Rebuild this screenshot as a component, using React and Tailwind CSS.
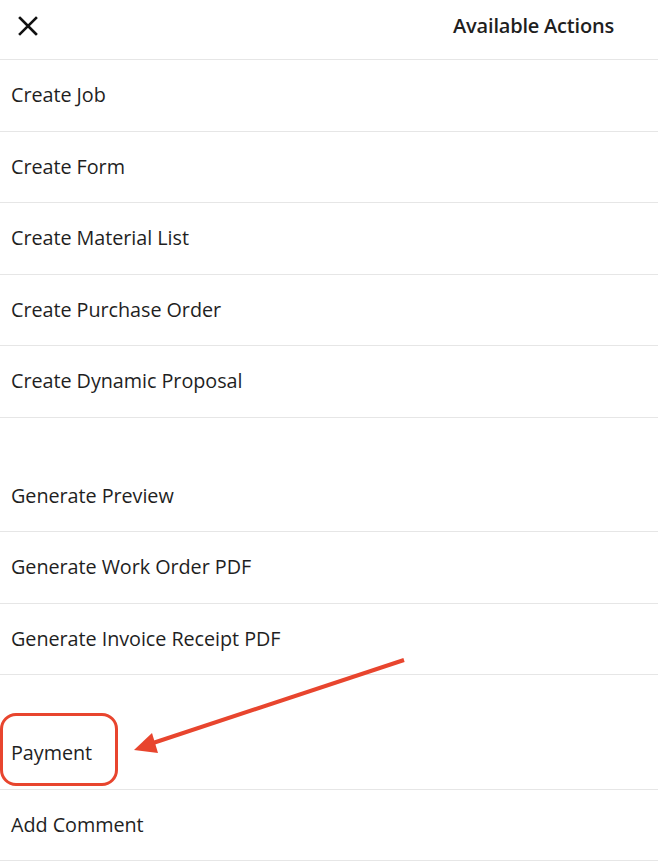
import React from 'react';

const sections = [
  ['Create Job', 'Create Form', 'Create Material List', 'Create Purchase Order', 'Create Dynamic Proposal'],
  ['Generate Preview', 'Generate Work Order PDF', 'Generate Invoice Receipt PDF'],
  ['Payment', 'Add Comment'],
];

const App = () => {
  return (
    <div className="relative w-[658px] h-[864px] bg-white overflow-hidden text-[#1f1f1f]" style={{ fontFamily: '"Open Sans", sans-serif' }}>
      {/* Header */}
      <div className="flex items-center justify-between h-[60px] border-b border-[#e6e6e6] pl-[16px] pr-[44px] pb-[8px]">
        <svg width="24" height="24" viewBox="0 0 24 24" fill="none" stroke="#111" strokeWidth="2.6" strokeLinecap="square">
          <path d="M4 4L20 20M20 4L4 20" />
        </svg>
        <span className="text-[20px] font-semibold tracking-[-0.2px]">Available Actions</span>
      </div>

      {/* Actions */}
      {sections.map((items, si) => (
        <div key={si} className={si > 0 ? 'pt-[43px]' : ''}>
          {items.map((label) => (
            <div key={label} className="flex items-center h-[71.5px] border-b border-[#e6e6e6] pl-[11px] text-[19.8px] tracking-[-0.05px]">
              {label}
            </div>
          ))}
        </div>
      ))}

      {/* Annotation */}
      <div className="absolute left-0 top-[713px] w-[118px] h-[73px] rounded-[16px] border-[3px] border-[#e8452e]" />
      <svg className="absolute left-0 top-0" width="658" height="864">
        <line x1="404" y1="660" x2="150" y2="744" stroke="#e8452e" strokeWidth="4" />
        <polygon points="134,750 152,733 158,753" fill="#e8452e" />
      </svg>
    </div>
  );
};

export default App;
